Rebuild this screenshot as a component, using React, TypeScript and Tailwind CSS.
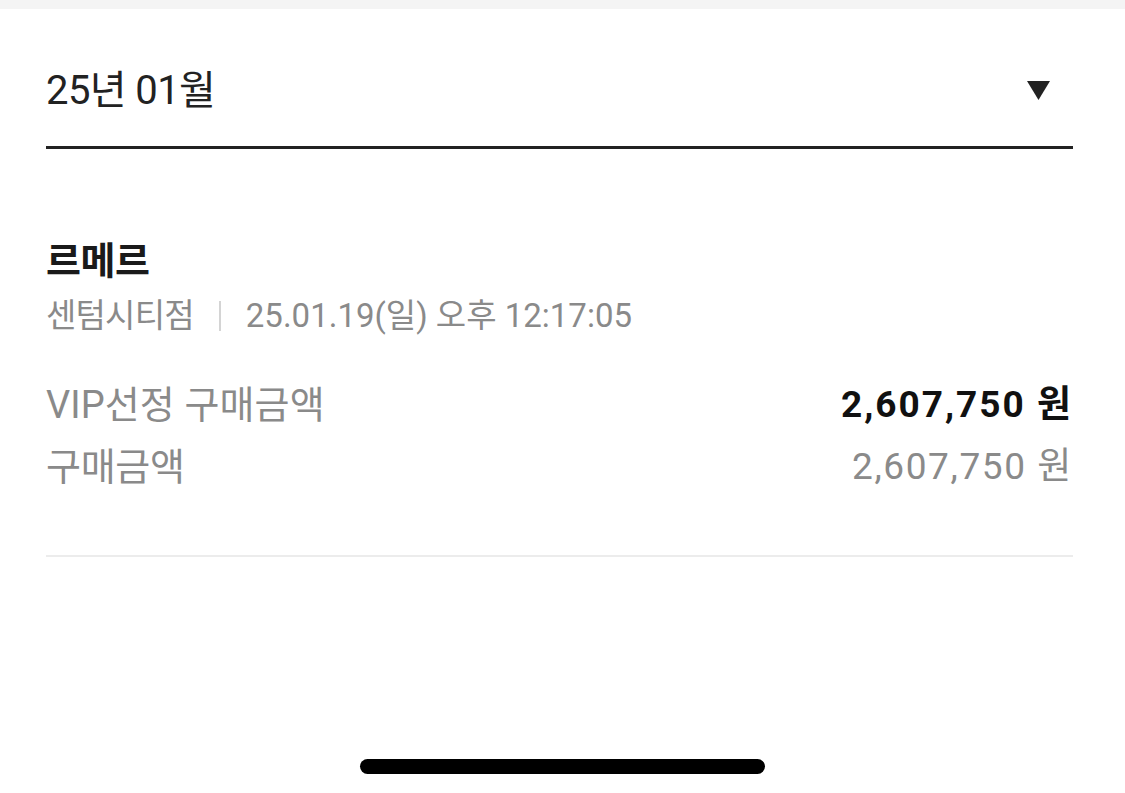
import React from "react";

export default function App() {
  const font = { fontFamily: 'Roboto, "Noto Sans CJK KR", sans-serif' };
  return (
    <div className="w-[1125px] h-[793px] bg-white overflow-hidden flex flex-col" style={font}>
      <div className="h-[9px] bg-[#f4f4f4]" />
      <div className="pl-[46px] pr-[52px] flex flex-col">
        <div className="h-[140px] pt-[26px] flex items-center justify-between border-b-[3px] border-[#222222]">
          <span className="text-[40px] leading-[48px] text-[#222222] tracking-[-0.6px]">25년 01월</span>
          <svg width="23" height="19" viewBox="0 0 23 19" className="mr-[23px]">
            <polygon points="0,0 23,0 11.5,19" fill="#222222" />
          </svg>
        </div>
        <div className="mt-[90px] text-[38px] leading-[44px] font-bold text-[#1a1a1a] tracking-[-0.5px]">르메르</div>
        <div className="mt-[11px] flex items-center text-[33px] leading-[44px] text-[#8a8a8a]">
          <span className="tracking-[-0.8px]">센텀시티점</span>
          <span className="inline-block w-[2px] h-[30px] bg-[#d4d4d4] mx-[25px]" />
          <span className="tracking-[0px]">25.01.19(일) 오후 12:17:05</span>
        </div>
        <div className="mt-[42px] flex items-center justify-between leading-[50px]">
          <span className="text-[38px] text-[#8a8a8a] tracking-[0.1px]">VIP선정 구매금액</span>
          <span className="text-[37px] font-bold text-[#111111] tracking-[2px]">2,607,750 원</span>
        </div>
        <div className="mt-[12px] flex items-center justify-between leading-[50px]">
          <span className="text-[38px] text-[#8a8a8a] tracking-[-0.3px]">구매금액</span>
          <span className="text-[37px] text-[#8a8a8a] tracking-[1.6px]">2,607,750 원</span>
        </div>
        <div className="mt-[63px] border-t-2 border-[#ececec]" />
      </div>
      <div className="mt-[202px] flex justify-center">
        <div className="w-[405px] h-[15px] rounded-full bg-black" />
      </div>
    </div>
  );
}
